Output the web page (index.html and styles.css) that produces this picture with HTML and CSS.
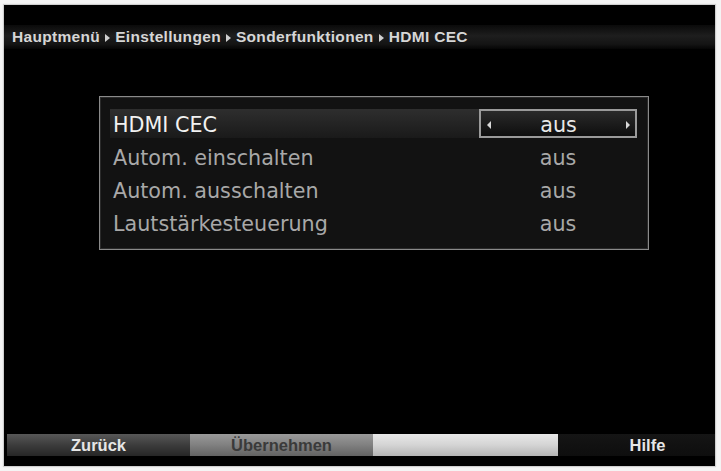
FILE: index.html
```html
<!DOCTYPE html>
<html lang="de">
<head>
<meta charset="utf-8">
<title>HDMI CEC</title>
<link rel="stylesheet" href="styles.css">
</head>
<body>
<div class="screen">
  <div class="crumbs">
    <span>Hauptmenü</span><span class="tri"></span><span>Einstellungen</span><span class="tri"></span><span>Sonderfunktionen</span><span class="tri"></span><span>HDMI CEC</span>
  </div>
  <div class="panel">
    <div class="row active">
      <span class="label">HDMI CEC</span>
      <span class="value sel"><span class="arr left"></span>aus<span class="arr right"></span></span>
    </div>
    <div class="row">
      <span class="label">Autom. einschalten</span>
      <span class="value">aus</span>
    </div>
    <div class="row">
      <span class="label">Autom. ausschalten</span>
      <span class="value">aus</span>
    </div>
    <div class="row">
      <span class="label">Lautstärkesteuerung</span>
      <span class="value">aus</span>
    </div>
  </div>
  <div class="spacer"></div>
  <div class="footer">
    <div class="btn back">Zurück</div>
    <div class="btn ok">Übernehmen</div>
    <div class="btn blank"></div>
    <div class="btn help">Hilfe</div>
  </div>
</div>
</body>
</html>
```
FILE: styles.css
```css
html, body {
  margin: 0;
  padding: 0;
  background: #f4f4f4;
}
body {
  width: 721px;
  height: 471px;
  overflow: hidden;
  font-family: "Liberation Sans", Arial, sans-serif;
}
.screen {
  margin: 5px 6px 5px 4px;
  width: 711px;
  height: 461px;
  background: #000;
  display: flex;
  flex-direction: column;
  box-shadow: 0 0 1px 1px #cfcfcf;
}
.crumbs {
  margin-top: 20px;
  height: 24px;
  background: linear-gradient(#0a0a0a, #1e1e1e 45%, #141414 80%, #050505);
  display: flex;
  align-items: center;
  padding-left: 8px;
  color: #d6d6d6;
  font-size: 15.5px;
  font-weight: bold;
  letter-spacing: 0.32px;
  gap: 5px;
}
.crumbs .tri {
  width: 0;
  height: 0;
  border-top: 4.5px solid transparent;
  border-bottom: 4.5px solid transparent;
  border-left: 5px solid #d0d0d0;
  margin-top: 1px;
}
.panel {
  margin: 47px 0 0 95px;
  width: 527px;
  height: 128px;
  border: 1px solid #8a8a8a;
  box-shadow: 0 0 0 1px #2a2a2a inset;
  background: #121212;
  padding: 12px 11px 12px 10px;
  display: flex;
  flex-direction: column;
  gap: 4px;
  font-family: "DejaVu Sans", "Liberation Sans", sans-serif;
}
.row {
  height: 29px;
  display: flex;
  align-items: center;
  justify-content: space-between;
  padding-left: 3px;
  font-size: 20.7px;
  color: #a8a8a8;
}
.row.active {
  background: linear-gradient(#2e2e2e, #242424 50%, #1a1a1a);
  color: #f2f2f2;
}
.label {
  padding-top: 2px;
}
.value {
  width: 158px;
  text-align: center;
  box-sizing: border-box;
  padding-top: 2px;
}
.value.sel {
  height: 29px;
  border: 2px solid #9a9a9a;
  background: linear-gradient(#2a2a2a, #1c1c1c 50%, #0e0e0e);
  color: #e8e8e8;
  display: flex;
  align-items: center;
  justify-content: space-between;
  padding: 2px 5px 0 6px;
}
.arr {
  width: 0;
  height: 0;
  border-top: 4px solid transparent;
  border-bottom: 4px solid transparent;
}
.arr.left {
  border-right: 4px solid #d8d8d8;
}
.arr.right {
  border-left: 4px solid #d8d8d8;
}
.spacer {
  flex: 1;
}
.footer {
  height: 22px;
  margin-bottom: 10px;
  display: grid;
  grid-template-columns: 3px 183px 183px 185px 157px;
  font-size: 16.5px;
  font-weight: bold;
}
.footer::before {
  content: "";
  background: #000;
}
.btn {
  display: flex;
  align-items: center;
  justify-content: center;
}
.back {
  background: linear-gradient(#585858, #3c3c3c 50%, #262626);
  color: #e6e6e6;
}
.ok {
  background: linear-gradient(#9a9a9a, #808080 50%, #626262);
  color: #3a3a3a;
}
.blank {
  background: linear-gradient(#e8e8e8, #d4d4d4 50%, #b4b4b4);
}
.help {
  background: linear-gradient(#151515, #0e0e0e);
  color: #e6e6e6;
  padding-left: 22px;
}
```
